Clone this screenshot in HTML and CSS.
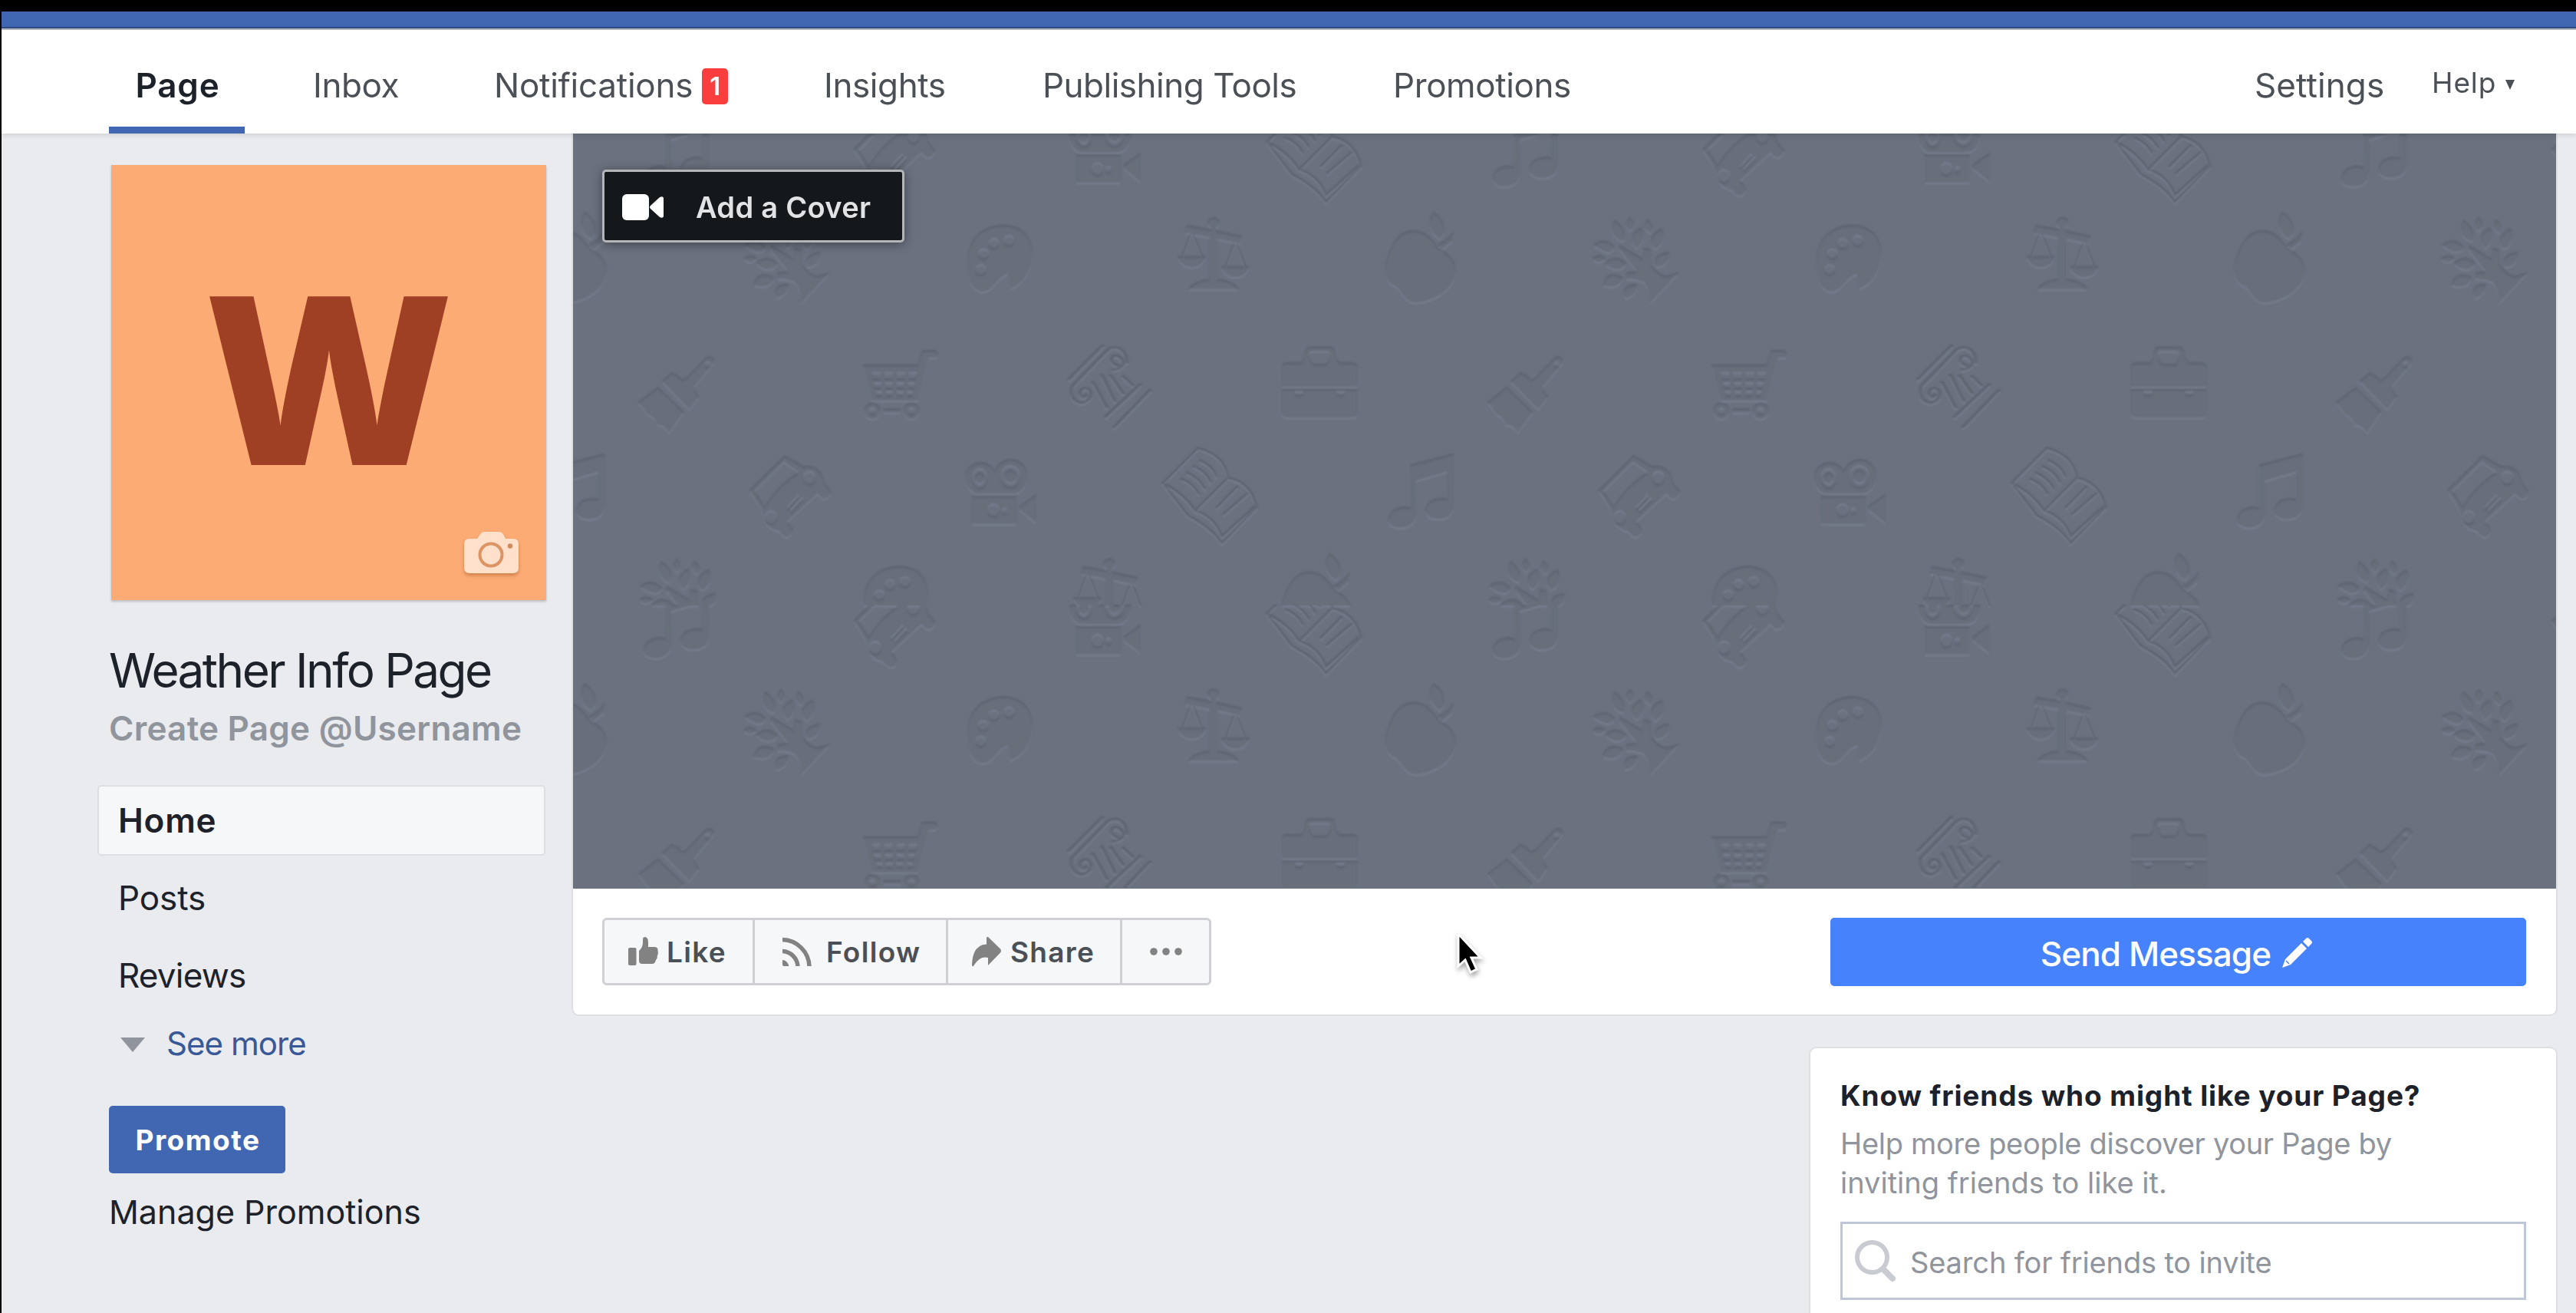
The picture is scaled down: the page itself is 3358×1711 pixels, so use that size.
FILE: index.html
```html
<!DOCTYPE html>
<html lang="en">
<head>
<meta charset="utf-8">
<title>Weather Info Page</title>
<link rel="stylesheet" href="styles.css">
</head>
<body>
<div class="screen-edge"></div>
<div class="app">
  <div class="blue-bar"></div>
  <nav class="tabs">
    <a class="tab tab-active">Page</a>
    <a class="tab">Inbox</a>
    <a class="tab tab-notif">Notifications<span class="badge">1</span></a>
    <a class="tab">Insights</a>
    <a class="tab tab-tight">Publishing Tools</a>
    <a class="tab">Promotions</a>
    <a class="tab tab-settings">Settings</a>
    <a class="tab tab-help">Help<svg class="help-caret" width="12" height="13" viewBox="0 0 12 13"><path d="M0 0H12L6 13Z" fill="#4b4f56"/></svg></a>
  </nav>

  <div class="main">
    <aside class="sidebar">
      <div class="avatar">
        <span class="avatar-letter">W</span>
        <svg class="avatar-camera" width="72" height="56" viewBox="0 0 72 56">
          <path d="M7 9H17L21 3Q23 0 26 0H46Q49 0 51 3L54 9H64Q71 9 71 16V47Q71 54 64 54H7Q0 54 0 47V16Q0 9 7 9Z" fill="#ffe0cb"/>
          <circle cx="35" cy="30" r="14.5" fill="none" stroke="#dc9465" stroke-width="4"/>
          <circle cx="60" cy="18.500" r="3.200" fill="#cf8a5e"/>
        </svg>
      </div>
      <h1 class="page-name">Weather Info Page</h1>
      <div class="page-handle">Create Page @Username</div>
      <div class="menu">
        <a class="menu-item menu-active">Home</a>
        <a class="menu-item menu-posts">Posts</a>
        <a class="menu-item menu-reviews">Reviews</a>
        <a class="menu-more"><svg width="32" height="19" viewBox="0 0 32 19"><path d="M0 0H32L16 19Z" fill="#90949c"/></svg><span>See more</span></a>
      </div>
      <button class="promote">Promote</button>
      <a class="manage">Manage Promotions</a>
    </aside>

    <section class="content">
      <div class="hero">
        <div class="cover">
          <svg class="cover-art" width="2585" height="983" viewBox="0 0 2585 983">
            <defs>
              <filter id="emboss" x="0" y="0" width="2585" height="983" filterUnits="userSpaceOnUse" color-interpolation-filters="sRGB">
                <feOffset in="SourceAlpha" dy="3" result="down"/>
                <feComposite in="SourceAlpha" in2="down" operator="out" result="topEdge"/>
                <feComposite in="down" in2="SourceAlpha" operator="out" result="lowEdge"/>
                <feFlood flood-color="#5f6471"/>
                <feComposite in2="topEdge" operator="in" result="dark"/>
                <feGaussianBlur in="dark" stdDeviation="1" result="darkSoft"/>
                <feFlood flood-color="#757b8a"/>
                <feComposite in2="lowEdge" operator="in" result="light"/>
                <feGaussianBlur in="light" stdDeviation="1" result="lightSoft"/>
                <feMerge>
                  <feMergeNode in="SourceGraphic"/>
                  <feMergeNode in="darkSoft"/>
                  <feMergeNode in="lightSoft"/>
                </feMerge>
              </filter>
              <clipPath id="tileClip"><rect x="-400" y="0" width="3400" height="614.6"/></clipPath>

              <!-- scales, apple, tree, palette -->
              <g id="rowA" fill="#686f7b">
                <g transform="translate(753 -14) scale(.446429 .357143)">
                  <path d="M183 344C205 344 202 372 191 380V392L266 412L260 440L195 422V570Q240 574 257 606H110Q128 574 172 570V418L101 400L106 372L176 388V380C160 372 165 344 183 344Z"/>
                  <path d="M78 486H161Q152 525 120 526Q88 525 78 486ZM205 522H288Q279 561 247 562Q215 561 205 522Z"/>
                  <path d="M116 404L92 488M124 404L150 488M243 440L219 524M251 440L277 524" fill="none" stroke="#646a77" stroke-width="4"/>
                  <path d="M768 392C800 392 820 420 840 455C872 480 890 500 890 540C888 610 820 655 770 655C735 650 735 600 705 590C685 570 685 550 686 520C700 440 725 392 768 392Z"/>
                  <path d="M826 324C850 340 862 375 857 402L845 422C815 400 806 360 826 324ZM884 394L882 430L850 462L838 444Q870 425 884 394Z"/>
                  <path d="M1370 445L1436 495L1440 455L1458 462L1462 520Q1485 555 1505 558L1542 545L1458 657Q1460 610 1440 580Q1420 568 1388 568L1390 545L1420 540L1368 460Z"/>
                  <path d="M1354 355C1375 370 1390 400 1380 430C1350 425 1342 390 1354 355ZM1399 345C1413 360 1412 380 1400 394C1386 380 1386 360 1399 345ZM1449 353C1466 365 1468 385 1458 402C1442 390 1440 370 1449 353ZM1432 382C1442 410 1438 440 1418 456C1398 430 1402 400 1432 382ZM1492 384C1502 410 1498 440 1475 460C1452 440 1460 400 1492 384ZM1292 445C1310 422 1338 425 1354 450C1350 475 1330 480 1292 445ZM1290 494C1302 478 1318 480 1328 494C1315 512 1302 512 1290 494ZM1326 512C1345 485 1372 488 1388 512C1378 540 1350 540 1326 512ZM1512 470C1515 500 1505 520 1478 526C1465 495 1480 475 1512 470ZM1320 592C1325 550 1352 545 1378 562C1375 590 1355 605 1320 592ZM1420 588C1420 615 1408 635 1386 638C1375 605 1390 585 1420 588Z"/>
                </g>
                <g transform="translate(-7 -14) scale(.574018 .333333)">
                  <path fill-rule="evenodd" d="M990 398C1035 400 1055 450 1055 510C1052 580 1035 630 1005 648L1000 590C975 600 970 655 942 660C912 650 908 600 908 530C912 450 940 400 990 398ZM990 458a12 20 0 1 0 24 0a12 20 0 1 0-24 0ZM956 469a12 20 0 1 0 24 0a12 20 0 1 0-24 0ZM932 510a12 20 0 1 0 24 0a12 20 0 1 0-24 0ZM926 572a12 20 0 1 0 24 0a12 20 0 1 0-24 0Z"/>
                </g>
              </g>

              <!-- briefcase, brush, cart, column -->
              <g id="rowB" fill="#686f7b">
                <g transform="translate(753 -14) scale(.446429 .357143)">
                  <path fill-rule="evenodd" d="M383 890Q383 874 397 874H438Q450 868 450 838Q453 816 465 816H525Q537 818 538 838Q542 874 555 874H590Q604 876 604 890V962H383ZM462 842Q464 832 474 832H514Q524 834 524 842Q524 868 512 880H475Q463 868 462 842Z"/>
                  <path fill-rule="evenodd" d="M383 970H604V1060Q602 1075 590 1075H398Q385 1073 383 1060ZM420 978a13 16 0 0 0 26 0ZM541 978a13 16 0 0 0 26 0Z"/>
                  <path fill-rule="evenodd" d="M1190 852Q1207 855 1203 875L1145 962Q1148 985 1160 997L1132 1045L1052 942L1080 910Q1098 920 1112 937Q1125 930 1132 918L1175 862Q1182 852 1190 852ZM1177 880a8 10 0 1 0 16 0a8 10 0 1 0-16 0Z"/>
                  <path d="M1040 963L1115 1054L1072 1130Q1060 1102 1036 1100Q1032 1072 1010 1064L983 1018Z"/>
                </g>
                <g transform="translate(-7 -14) scale(.574018 .333333)">
                  <path fill-rule="evenodd" d="M670 945H795L805 888H836Q844 903 836 918H820L795 1085H690ZM691 974H710V998H693ZM719 974H738V998H719ZM747 974H766V998H747ZM774 974H794L791 998H774ZM695 1014H712V1034H698ZM721 1014H738V1034H721ZM747 1014H764V1034H747ZM773 1014H789L786 1034H773ZM700 1048H714V1064H702ZM723 1048H738V1064H723ZM747 1048H762V1064H747ZM771 1048H784L782 1064H771ZM674 1125a18 32 0 1 0 36 0a18 32 0 1 0-36 0ZM685 1125a7 13 0 1 0 14 0a7 13 0 1 0-14 0ZM763 1125a18 32 0 1 0 36 0a18 32 0 1 0-36 0ZM774 1125a7 13 0 1 0 14 0a7 13 0 1 0-14 0ZM718 1116H756V1132H718Z"/>
                  <path d="M1216 868L1137 1005M1252 950C1228 945 1232 900 1250 912C1276 940 1256 965 1236 965M1270 940C1268 870 1236 865 1222 895L1146 1030C1136 1090 1170 1115 1186 1075C1195 1035 1165 1020 1164 1060C1168 1080 1178 1072 1176 1060M1192 1010L1225 1115M1212 982L1243 1090M1232 985L1262 1060M1260 988L1284 1028M1302 1020L1220 1152M1324 1042L1240 1192" fill="none" stroke="#646a77" stroke-width="8"/>
                </g>
              </g>

              <!-- book, music, car, camcorder -->
              <g id="rowC" fill="#686f7b">
                <g transform="translate(753 -14) scale(.446429 .357143)">
                  <path d="M138 1187Q215 1210 226 1295L130 1415Q95 1350 36 1314ZM226 1295Q290 1310 308 1395L208 1508Q185 1435 130 1415M40 1322L108 1432Q175 1475 208 1533L312 1400M142 1230Q180 1250 192 1290M124 1252Q165 1275 175 1312M105 1275Q145 1300 158 1335M88 1298Q125 1315 140 1355M255 1325L192 1405M285 1350L210 1430" fill="none" stroke="#656b78" stroke-width="7"/>
                  <path d="M758 1247L884 1206V1400Q880 1445 840 1445Q802 1443 802 1410Q808 1370 850 1368L866 1372V1272L774 1305V1430Q770 1475 728 1477Q695 1475 694 1445Q700 1405 740 1400L758 1405Z"/>
                  <path fill-rule="evenodd" d="M1410 1212L1465 1252Q1500 1243 1520 1285L1525 1312L1545 1343Q1540 1375 1520 1370L1505 1352L1416 1455Q1440 1480 1430 1500Q1415 1525 1395 1490Q1360 1480 1352 1450Q1348 1410 1307 1340ZM1408 1235L1452 1274Q1390 1320 1352 1400L1322 1342ZM1464 1293a18 24 0 1 0 36 0a18 24 0 1 0-36 0ZM1352 1437a18 24 0 1 0 36 0a18 24 0 1 0-36 0ZM1449 1355L1415 1402L1419 1408L1454 1362ZM1460 1366L1425 1412L1430 1418L1465 1372Z"/>
                </g>
                <g transform="translate(-7 386) scale(.714286 .395405)">
                  <path fill-rule="evenodd" d="M726 158C726 94 770 94 780 135C788 80 838 84 838 150C838 180 830 210 812 210H745C732 200 726 180 726 158ZM738 158a14 32 0 1 0 28 0a14 32 0 1 0-28 0ZM790 152a18 36 0 1 0 36 0a18 36 0 1 0-36 0Z"/>
                  <path d="M744 158a8 18 0 1 0 16 0a8 18 0 1 0-16 0ZM798 152a10 21 0 1 0 20 0a10 21 0 1 0-20 0Z"/>
                  <path fill-rule="evenodd" d="M738 216H819V310H738ZM766 263a11 21 0 1 0 22 0a11 21 0 1 0-22 0ZM792 265a5 10 0 1 0 10 0a5 10 0 1 0-10 0ZM855 212V306L825 262V250Z"/>
                </g>
              </g>

              <g id="tile" clip-path="url(#tileClip)">
                <use href="#rowC" transform="translate(135.7 -444.6)"/>
                <use href="#rowA"/>
                <use href="#rowB"/>
                <use href="#rowC"/>
                <use href="#rowA" transform="translate(-135.7 444.6)"/>
              </g>
              <g id="band">
                <use href="#tile" x="-1106.6"/>
                <use href="#tile"/>
                <use href="#tile" x="1106.6"/>
                <use href="#tile" x="2213.2"/>
              </g>
            </defs>
            <g filter="url(#emboss)">
              <use href="#band"/>
              <use href="#band" y="614.6"/>
            </g>
          </svg>
          <button class="add-cover">
            <svg width="56" height="34" viewBox="0 0 56 34"><rect width="35" height="34" rx="6" fill="#fff"/><path d="M37 15L49 4Q54 2 54 6V28Q54 32 49 30L37 19Q35 17 37 15Z" fill="#fff"/></svg>
            <span>Add a Cover</span>
          </button>
        </div>
        <div class="actions">
          <div class="button-group">
            <button class="act act-like">
              <svg width="39" height="38" viewBox="0 0 39 38"><rect x="0" y="14" width="10.500" height="23" rx="2" fill="#828282"/><path d="M14 18Q18.500 14 19 8V3Q19 0 22 0Q26 .5 26 7V13H34Q39 13 38.500 18Q39.500 21 38 24Q38 28 36 30Q35 35 31 35H18Q14 35 14 31Z" fill="#828282"/></svg>
              <span>Like</span>
            </button>
            <button class="act act-follow">
              <svg width="38" height="38" viewBox="0 0 38 38"><g fill="none" stroke="#828282" stroke-width="5.500"><path d="M0 3.500A36 36 0 0 1 35 38"/><path d="M0 18.500A21 21 0 0 1 20 38"/></g><path d="M0 30Q6 30 8.500 38H2Q0 38 0 36Z" fill="#828282"/></svg>
              <span>Follow</span>
            </button>
            <button class="act act-share">
              <svg width="39" height="39" viewBox="0 0 39 39"><path d="M21 0L37 15.500Q39 18 37 20.500L21 37V27Q10 24 2 38Q0 39 0 36Q1 10 19 9.500V1Q20-1 21 0Z" fill="#828282"/></svg>
              <span>Share</span>
            </button>
            <button class="act act-more">
              <svg width="42" height="10" viewBox="0 0 42 10"><g fill="#828282"><circle cx="5" cy="5" r="4.800"/><circle cx="21" cy="5" r="4.800"/><circle cx="37" cy="5" r="4.800"/></g></svg>
            </button>
          </div>
          <button class="send">
            <span>Send Message</span>
            <svg width="40" height="40" viewBox="0 0 40 40" fill="#fff"><path d="M25 8L32 15L11 36L0 40L4 29ZM27 6L31 2Q33 0 35 2L38 5Q40 7 38 9L34 13Z"/><path d="M5 31L9 35" stroke="#4582fc" stroke-width="1.500"/></svg>
          </button>
        </div>
      </div>

      <div class="friends-card">
        <h2 class="card-title">Know friends who might like your Page?</h2>
        <p class="card-text"><span class="card-line">Help more people discover your Page by</span><br>inviting friends to like it.</p>
        <div class="search">
          <svg width="54" height="56" viewBox="0 0 54 56" fill="none" stroke="#c8cbd1"><circle cx="22.500" cy="23.500" r="19.500" stroke-width="6"/><path d="M37 39L49 51" stroke-width="8" stroke-linecap="round"/></svg>
          <span>Search for friends to invite</span>
        </div>
      </div>
    </section>
  </div>
</div>
<svg class="cursor" width="44" height="66" viewBox="0 0 44 66"><path d="M5 4V46L14 38L21 54L29 50L22 35H34Z" fill="#000" stroke="#fff" stroke-width="3"/></svg>
</body>
</html>
```
FILE: styles.css
```css
* { box-sizing: border-box; }

body {
  margin: 0;
  width: 3358px;
  height: 1711px;
  overflow: hidden;
  background: #e9ebee;
  color: #1d2129;
  font-family: Inter, "Liberation Sans", sans-serif;
  font-size: 44px;
}

button {
  margin: 0;
  padding: 0;
  font: inherit;
  border: 0;
}

svg { display: block; flex: none; }

.screen-edge { height: 15px; background: #000; }

.app {
  height: 1696px;
  overflow: hidden;
  border-left: 2px solid #000;
}

.blue-bar {
  height: 24px;
  background: #4267b2;
  border-bottom: 2px solid #b9bcc2;
  box-shadow: inset 0 -2px 0 #2f4c86;
}

/* top tabs */
.tabs {
  position: relative;
  z-index: 1;
  display: grid;
  grid-template-columns: 266px 236px 430px 285px 457px 1123px 231px 1fr;
  height: 135px;
  padding-left: 140px;
  background: #fff;
  color: #4b4f56;
  box-shadow: 0 1px 8px rgba(0, 0, 0, .15);
}

.tab {
  display: flex;
  align-items: center;
  padding-top: 9px;
  letter-spacing: -.4px;
  white-space: nowrap;
}

.tab-active {
  justify-content: center;
  width: 177px;
  border-bottom: 9px solid #4267b2;
  padding-top: 18px;
  padding-left: 2px;
  color: #1d2129;
  font-weight: 600;
  letter-spacing: .8px;
}

.tab-notif { letter-spacing: -.25px; }
.tab-tight { letter-spacing: -.5px; }
.tab-settings { letter-spacing: .1px; }

.tab-help {
  padding-top: 1px;
  font-size: 37px;
  letter-spacing: .9px;
}

.help-caret { margin: 6px 0 0 12px; }

.badge {
  display: flex;
  align-items: center;
  justify-content: center;
  width: 34px;
  height: 47px;
  margin: 2px 0 0 12px;
  border-radius: 5px;
  background: #fa3e3e;
  color: #fff;
  font-size: 33px;
  font-weight: 600;
}

/* columns */
.main { display: flex; }

.sidebar {
  display: flex;
  flex-direction: column;
  align-items: flex-start;
  width: 745px;
  padding: 41px 0 0 140px;
}

.avatar {
  position: relative;
  display: flex;
  justify-content: center;
  width: 567px;
  height: 567px;
  margin-left: 3px;
  background: #fcab74;
  box-shadow: 0 2px 3px rgba(0, 0, 0, .2);
}

.avatar-letter {
  height: 567px;
  line-height: 543px;
  font-family: "Open Sans", Inter, sans-serif;
  font-size: 308px;
  font-weight: 800;
  color: #9f4024;
}

.avatar-camera {
  position: absolute;
  right: 35px;
  bottom: 33px;
  filter: drop-shadow(0 3px 2px rgba(140, 70, 20, .4));
}

.page-name {
  margin: 52px 0 0;
  line-height: 80px;
  font-size: 62px;
  font-weight: 400;
  letter-spacing: -2.55px;
  white-space: nowrap;
}

.page-handle {
  margin-top: 7px;
  line-height: 56px;
  color: #90949c;
  font-weight: 600;
  letter-spacing: .25px;
  white-space: nowrap;
}

.menu {
  width: 584px;
  margin: 46px 0 0 -15px;
}

.menu-item {
  display: flex;
  align-items: center;
  height: 101px;
  padding-left: 27px;
  letter-spacing: -.1px;
}

.menu-active {
  height: 92px;
  margin-bottom: 4px;
  padding-left: 25px;
  border: 2px solid #dddfe2;
  border-radius: 5px;
  background: #f6f7f9;
  font-weight: 600;
  letter-spacing: .8px;
}

.menu-reviews { letter-spacing: -.8px; }

.menu-more {
  display: flex;
  align-items: center;
  gap: 28px;
  height: 77px;
  padding-left: 30px;
  color: #385898;
  font-size: 42px;
  letter-spacing: -.95px;
}

.menu-more svg { margin-top: 4px; }

.promote {
  width: 230px;
  height: 88px;
  margin-top: 43px;
  padding-left: 2px;
  border-radius: 5px;
  background: #4267b2;
  color: #fff;
  font-size: 37px;
  font-weight: 700;
  letter-spacing: 1.5px;
}

.manage {
  margin-top: 20px;
  line-height: 60px;
  font-size: 43px;
  white-space: nowrap;
}

.content {
  display: flex;
  flex-direction: column;
  align-items: flex-end;
  width: 2585px;
}

/* cover and actions */
.hero {
  width: 2585px;
  border-radius: 0 0 8px 8px;
  background: #fff;
  box-shadow: 0 0 0 2px #dddfe2;
}

.cover {
  display: grid;
  height: 984px;
  background: #6b717f;
}

.cover-art, .add-cover { grid-area: 1 / 1; }

.add-cover {
  position: relative;
  display: flex;
  align-items: center;
  gap: 40px;
  width: 394px;
  height: 95px;
  margin: 47px 0 0 38px;
  padding-left: 23px;
  border: 3px solid #b4b6ba;
  border-radius: 5px;
  background: #14181a;
  color: #e2e3e5;
  font-size: 38px;
  font-weight: 600;
  letter-spacing: .3px;
  box-shadow: 0 2px 14px rgba(0, 0, 0, .4);
}

.add-cover span { margin-top: 3px; }
.add-cover svg { margin-top: 2px; }

.actions {
  display: flex;
  justify-content: space-between;
  height: 164px;
  padding: 38px 39px 0 38px;
}

.button-group {
  display: flex;
  width: 794px;
  height: 88px;
  border: 3px solid #ced0d4;
  border-radius: 6px;
  background: #f6f7f9;
}

.act {
  display: flex;
  align-items: center;
  background: none;
  color: #4b4f56;
  font-size: 37px;
  font-weight: 600;
  letter-spacing: 1.3px;
}

.act + .act { border-left: 3px solid #ced0d4; }
.act-like { width: 193px; padding-left: 31px; gap: 11px; }
.act-follow { width: 252px; padding-left: 36px; gap: 19px; }
.act-share { width: 227px; padding-left: 31px; gap: 11px; }
.act-more { flex: 1; justify-content: center; }

.send {
  display: flex;
  align-items: center;
  justify-content: center;
  gap: 15px;
  width: 907px;
  height: 89px;
  padding-right: 4px;
  border-radius: 5px;
  background: #4582fc;
  color: #fff;
  font-weight: 500;
  letter-spacing: -.9px;
}

.send span { margin-top: 5px; }

/* friends card */
.friends-card {
  width: 972px;
  height: 420px;
  margin-top: 44px;
  padding: 37px 39px 0 39px;
  border-radius: 8px;
  background: #fff;
  box-shadow: 0 0 0 2px #dddfe2;
}

.card-title {
  margin: 0;
  line-height: 50px;
  font-size: 37px;
  font-weight: 700;
  letter-spacing: .9px;
  white-space: nowrap;
}

.card-text {
  margin: 12px 0 0;
  line-height: 51px;
  font-size: 38px;
  color: #90949c;
}

.card-line { letter-spacing: -.3px; }

.search {
  display: flex;
  align-items: center;
  gap: 18px;
  height: 102px;
  margin-top: 25px;
  padding-left: 16px;
  border: 3px solid #bec6d8;
  color: #90949c;
  font-size: 38px;
  letter-spacing: -.15px;
}

.search span { margin-top: 4px; }

.cursor {
  position: absolute;
  left: 1896px;
  top: 1213px;
  filter: drop-shadow(1px 4px 3px rgba(0, 0, 0, .35));
}
```
